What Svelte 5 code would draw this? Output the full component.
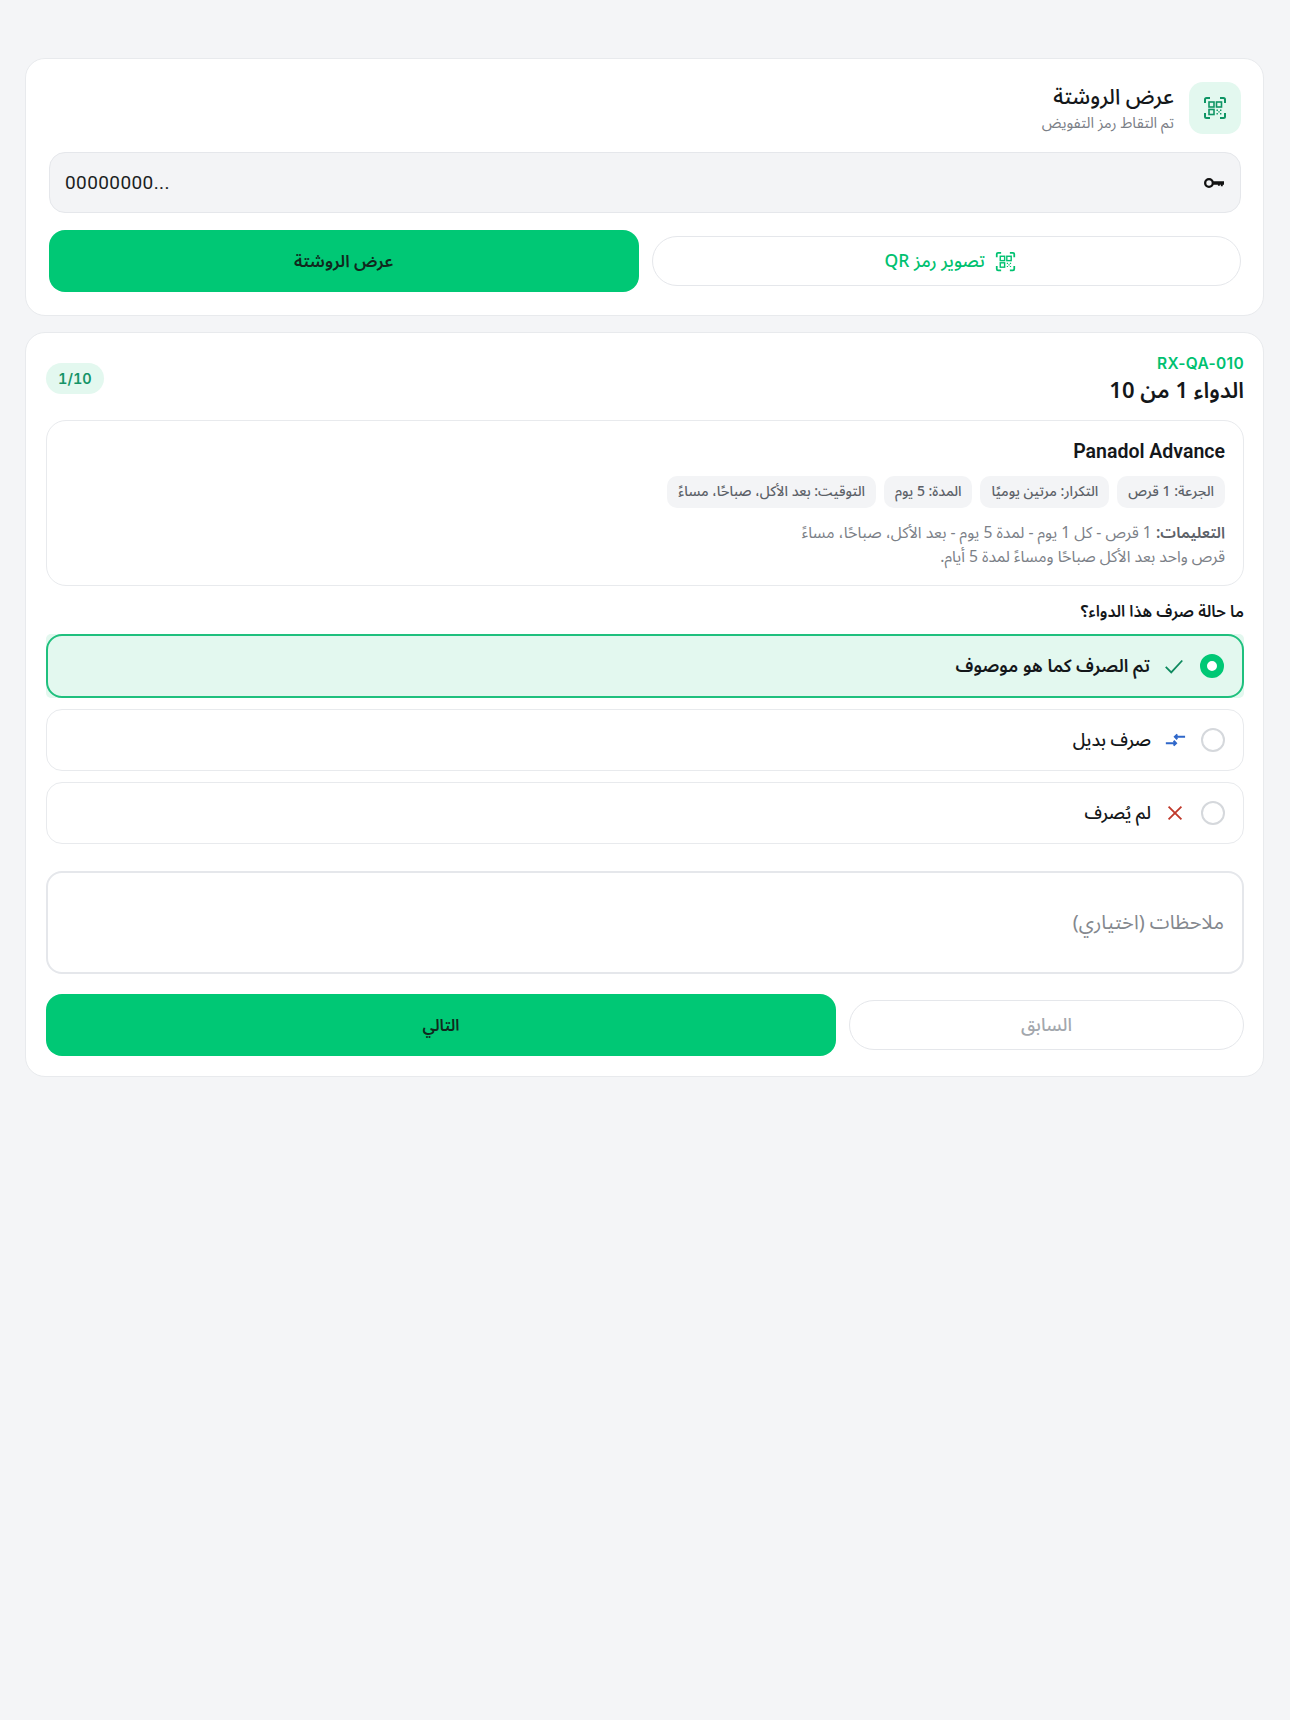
<script>
	const chips = ['الجرعة: 1 قرص', 'التكرار: مرتين يوميًا', 'المدة: 5 يوم', 'التوقيت: بعد الأكل، صباحًا، مساءً'];
	const options = [
		{ id: 'ok', label: 'تم الصرف كما هو موصوف' },
		{ id: 'alt', label: 'صرف بديل' },
		{ id: 'no', label: 'لم يُصرف' }
	];
	let status = $state('ok');
	let code = $state('00000000...');
</script>

{#snippet qr()}
	<svg viewBox="0 0 24 24" fill="none" stroke="currentColor" stroke-width="2" aria-hidden="true">
		<path d="M2 7V3.500A1.500 1.500 0 0 1 3.500 2H7M17 2h3.500A1.500 1.500 0 0 1 22 3.500V7M22 17v3.500a1.500 1.500 0 0 1-1.500 1.500H17M7 22H3.500A1.500 1.500 0 0 1 2 20.500V17" />
		<rect x="6" y="6" width="5" height="5" stroke-width="1.600" />
		<rect x="13.500" y="6" width="5" height="5" stroke-width="1.600" />
		<rect x="6" y="13.500" width="5" height="5" stroke-width="1.600" />
		<path d="M13.500 13.500h1.400v1.400h-1.400zM17 13.500h1.400v1.400H17zM15.300 15.200h1.400v1.400h-1.400zM13.500 17h1.400v1.400h-1.400zM17 17h1.400v1.400H17z" fill="currentColor" stroke="none" />
	</svg>
{/snippet}

<main dir="rtl">
	<section class="card scan">
		<header class="head">
			<div class="head-icon">{@render qr()}</div>
			<div>
				<h1>عرض الروشتة</h1>
				<p>تم التقاط رمز التفويض</p>
			</div>
		</header>

		<label class="code-field">
			<svg class="key" viewBox="0 0 24 24" fill="none" aria-hidden="true">
				<circle cx="6" cy="12" r="4.600" stroke="currentColor" stroke-width="2.800" />
				<path d="M11 10h13v4h-1.500v1.800h-2.300V14h-1.200v1.400h-2.300V14H11Z" fill="currentColor" />
			</svg>
			<input dir="ltr" bind:value={code} />
		</label>

		<div class="actions even">
			<button class="ghost qr-btn"><span class="btn-icon">{@render qr()}</span>تصوير رمز QR</button>
			<button class="primary">عرض الروشتة</button>
		</div>
	</section>

	<section class="card meds">
		<header class="med-head">
			<div>
				<div class="ref" dir="ltr">RX-QA-010</div>
				<h2>الدواء 1 من 10</h2>
			</div>
			<span class="count" dir="ltr">1/10</span>
		</header>

		<article class="med">
			<h3 dir="ltr">Panadol Advance</h3>
			<ul class="chips">
				{#each chips as chip}
					<li>{chip}</li>
				{/each}
			</ul>
			<p class="notes"><strong>التعليمات:</strong> 1 قرص - كل 1 يوم - لمدة 5 يوم - بعد الأكل، صباحًا، مساءً<br />قرص واحد بعد الأكل صباحًا ومساءً لمدة 5 أيام.</p>
		</article>

		<h4>ما حالة صرف هذا الدواء؟</h4>
		<div class="options">
			{#each options as opt}
				<button class="option" class:selected={status === opt.id} onclick={() => (status = opt.id)}>
					<span class="radio"></span>
					{#if opt.id === 'ok'}
						<svg class="opt-icon" viewBox="0 0 24 24" fill="none" stroke="#0f8a5f" stroke-width="2"><path d="M3 13l6 6L21 6" /></svg>
					{:else if opt.id === 'alt'}
						<svg class="opt-icon" viewBox="0 0 24 24" fill="none" stroke="#2f67c9" stroke-width="2.200"><path d="M2 15.500h11M10.500 12.900l2.600 2.600-2.600 2.600" /><path d="M23 8.500H12M14.500 5.900l-2.600 2.600 2.600 2.600" /></svg>
					{:else}
						<svg class="opt-icon" viewBox="0 0 24 24" fill="none" stroke="#c0392b" stroke-width="2"><path d="M5 5l14 14M19 5L5 19" /></svg>
					{/if}
					<span>{opt.label}</span>
				</button>
			{/each}
		</div>

		<textarea placeholder="ملاحظات (اختياري)"></textarea>

		<div class="actions weighted">
			<button class="ghost" disabled>السابق</button>
			<button class="primary next">التالي</button>
		</div>
	</section>
</main>

<style>
	:global(body) {
		margin: 0;
		background: #f4f5f7;
	}
	main {
		min-height: 1720px;
		box-sizing: border-box;
		padding: 58px 26px 0 25px;
		font-family: "Noto Sans Arabic", "IBM Plex Sans Arabic", "Noto Sans", "DejaVu Sans", sans-serif;
		color: #14171a;
	}
	.card {
		background: #fff;
		border: 1px solid #e8eaed;
		border-radius: 20px;
		margin-bottom: 16px;
	}
	.scan {
		padding: 23px 22px 23px 23px;
	}
	.meds {
		padding: 20px 19px 20px 20px;
	}
	.head {
		display: flex;
		align-items: center;
		gap: 15px;
	}
	.head-icon {
		width: 52px;
		height: 52px;
		border-radius: 14px;
		background: #e3f8ef;
		color: #0f9565;
		display: grid;
		place-items: center;
	}
	.head-icon svg {
		width: 24px;
		height: 24px;
	}
	h1 {
		margin: 0;
		font-size: 21.500px;
		line-height: 30px;
		font-weight: 500;
	}
	.head p {
		margin: 0;
		font-size: 15px;
		line-height: 22px;
		color: #7b8087;
	}
	.code-field {
		display: flex;
		align-items: center;
		gap: 16px;
		height: 61px;
		box-sizing: border-box;
		margin-top: 18px;
		padding: 0 16px 0 15px;
		background: #f3f4f6;
		border: 1px solid #e5e7eb;
		border-radius: 16px;
	}
	.key {
		width: 20px;
		height: 20px;
		flex: none;
		color: #111;
	}
	.code-field input {
		flex: 1;
		min-width: 0;
		border: 0;
		outline: 0;
		padding: 0;
		background: none;
		font: 400 19px "Roboto", sans-serif;
		letter-spacing: 0.4px;
		color: #1b1e22;
	}
	.actions {
		display: grid;
		align-items: center;
		gap: 13px;
	}
	.even {
		grid-template-columns: 1fr 1fr;
		margin-top: 17px;
	}
	.weighted {
		grid-template-columns: 1fr 2fr;
		margin-top: 20px;
	}
	button {
		font-family: inherit;
		cursor: pointer;
	}
	.primary {
		height: 62px;
		padding: 2px 0 0;
		border: 0;
		border-radius: 16px;
		background: #00c875;
		color: #10281d;
		font-size: 17px;
		font-weight: 600;
	}
	.next {
		font-size: 16px;
	}
	.ghost {
		height: 50px;
		background: #fff;
		border: 1.500px solid #e5e7eb;
		border-radius: 25px;
		font-size: 18px;
		font-weight: 500;
		color: #a3a7ad;
	}
	.qr-btn {
		display: flex;
		align-items: center;
		justify-content: center;
		gap: 10px;
		padding: 0 0 0 8px;
		font-size: 17.500px;
		color: #00c170;
	}
	.btn-icon {
		width: 21px;
		height: 21px;
	}
	.btn-icon svg {
		display: block;
	}
	.med-head {
		display: flex;
		align-items: center;
		justify-content: space-between;
	}
	.ref {
		font: 600 15.500px/21px "Inter", sans-serif;
		letter-spacing: 0.3px;
		color: #00c170;
		text-align: right;
	}
	h2 {
		margin: 0;
		font-size: 22px;
		line-height: 35px;
		font-weight: 600;
	}
	.count {
		padding: 0 12px;
		height: 31px;
		margin-bottom: 6px;
		border-radius: 16px;
		background: #e3f8ef;
		color: #149467;
		font: 600 14.500px/31px "Inter", sans-serif;
		font-variant-numeric: tabular-nums;
	}
	.med {
		margin-top: 11px;
		padding: 18px 18px 16px;
		border: 1px solid #e8eaed;
		border-radius: 20px;
	}
	h3 {
		margin: 0;
		font: 600 19.500px/26px "Roboto", sans-serif;
		text-align: right;
	}
	.chips {
		list-style: none;
		display: flex;
		gap: 8px;
		margin: 11px 0 0;
		padding: 0;
	}
	.chips li {
		height: 32px;
		line-height: 32px;
		padding: 0 11px;
		border-radius: 10px;
		background: #f3f4f6;
		color: #5c6168;
		font-size: 14px;
		font-weight: 500;
	}
	.notes {
		margin: 13px 0 0;
		font-size: 15.700px;
		line-height: 24px;
		color: #7b8087;
	}
	.notes strong {
		color: #5c6168;
		font-weight: 600;
	}
	h4 {
		margin: 14px 0 0;
		font-size: 16px;
		line-height: 24px;
		font-weight: 600;
	}
	.options {
		display: flex;
		flex-direction: column;
		gap: 11px;
		margin-top: 10px;
	}
	.option {
		position: relative;
		display: flex;
		align-items: center;
		gap: 13px;
		height: 62px;
		padding: 0 18px;
		background: #fff;
		border: 1px solid #e8eaed;
		border-radius: 16px;
		font-size: 17.600px;
		font-weight: 500;
		color: #14171a;
		text-align: right;
	}
	.selected {
		height: 64px;
		background: #e3f8ef;
		border: 0;
		border-radius: 5px;
		padding: 0 20px;
		font-size: 17.800px;
		font-weight: 600;
	}
	.selected::after {
		content: '';
		position: absolute;
		inset: 0;
		border: 2px solid #1fc07e;
		border-radius: 16px;
	}
	.radio {
		width: 24px;
		height: 24px;
		box-sizing: border-box;
		border: 2px solid #d5d8dc;
		border-radius: 50%;
		background: #fff;
	}
	.selected .radio {
		border: 7px solid #00c875;
	}
	.opt-icon {
		width: 22px;
		height: 22px;
		margin-inline-start: 2px;
	}
	textarea {
		display: block;
		width: 100%;
		height: 103px;
		box-sizing: border-box;
		margin-top: 27px;
		padding: 35px 18px 0;
		border: 2px solid #e5e7eb;
		border-radius: 16px;
		outline: 0;
		resize: none;
		font-family: inherit;
		font-size: 20px;
		line-height: 30px;
	}
	textarea::placeholder {
		color: #84888e;
	}
</style>
